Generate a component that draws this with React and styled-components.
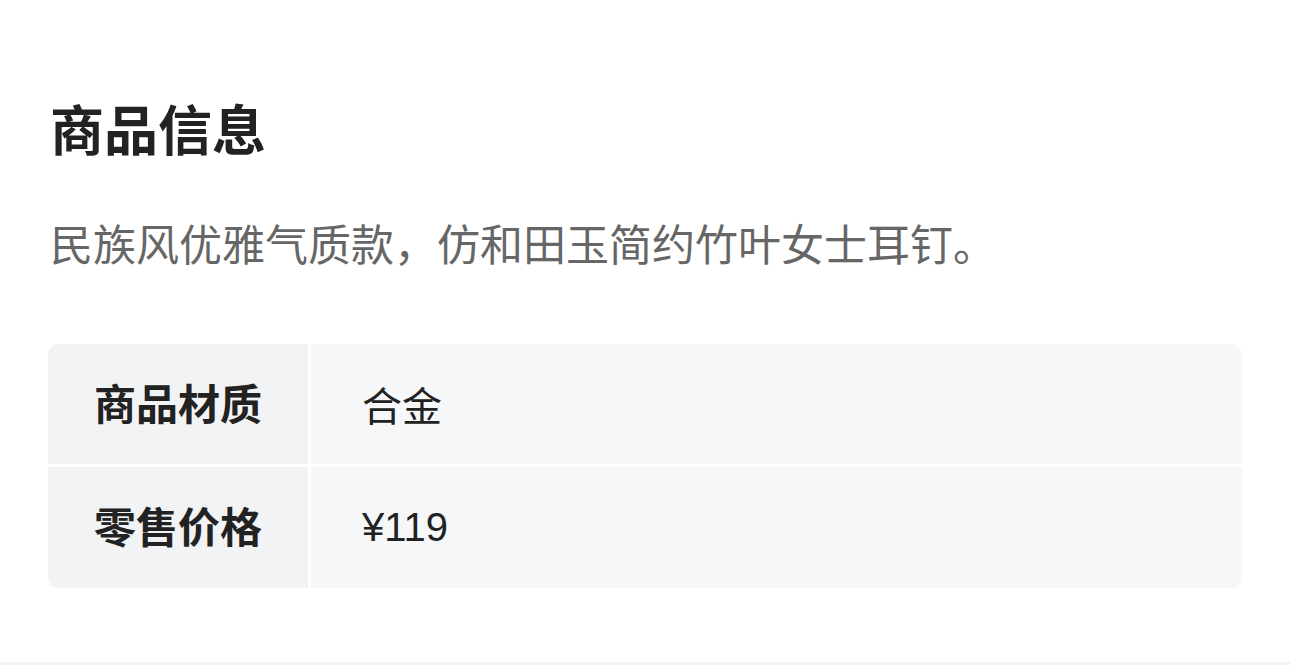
import React from 'react';
import styled, { createGlobalStyle } from 'styled-components';

const GlobalStyle = createGlobalStyle`
  body {
    margin: 0;
    background: #fff;
    font-family: 'Noto Sans CJK SC', 'Noto Sans', sans-serif;
  }
`;

const Page = styled.div`
  padding: 96px 48px 0;
`;

const Title = styled.h2`
  margin: 0;
  font-size: 54px;
  line-height: 64px;
  font-weight: 700;
  color: #222;
  padding-left: 2px;
`;

const Desc = styled.p`
  margin: 52px 0 0;
  font-size: 43px;
  line-height: 60px;
  color: #666;
  padding-left: 2px;
`;

const Table = styled.div`
  margin-top: 72px;
  display: grid;
  grid-template-columns: 260px 1fr;
  grid-template-rows: 120px 121px;
  gap: 3px;
  border-radius: 10px;
  overflow: hidden;
  background: #fff;
`;

const Label = styled.div`
  background: #f2f3f5;
  display: flex;
  align-items: center;
  justify-content: center;
  padding-bottom: 6px;
  font-size: 42px;
  font-weight: 700;
  color: #222;
`;

const Value = styled.div`
  background: #f6f7f9;
  display: flex;
  align-items: center;
  padding-left: 51px;
  font-size: 40px;
  font-family: 'Liberation Sans', 'Noto Sans CJK SC', sans-serif;
  color: #222;
`;

const Divider = styled.div`
  margin-top: 74px;
  height: 10px;
  background: #f3f3f3;
`;

const rows = [
  { label: '商品材质', value: '合金' },
  { label: '零售价格', value: '¥119' },
];

export default function App() {
  return (
    <>
      <GlobalStyle />
      <Page>
        <Title>商品信息</Title>
        <Desc>民族风优雅气质款，仿和田玉简约竹叶女士耳钉。</Desc>
        <Table>
          {rows.map((r) => (
            <React.Fragment key={r.label}>
              <Label>{r.label}</Label>
              <Value>{r.value}</Value>
            </React.Fragment>
          ))}
        </Table>
      </Page>
      <Divider />
    </>
  );
}
